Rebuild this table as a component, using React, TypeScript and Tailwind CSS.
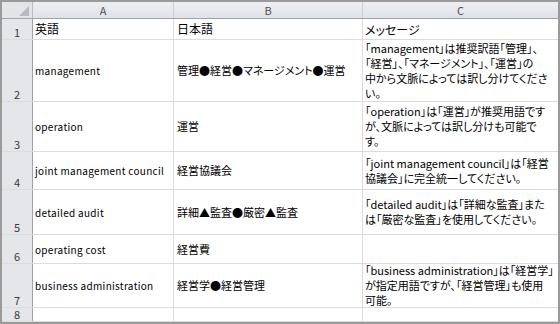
const font = { fontFamily: '"Noto Sans CJK JP", "Noto Sans", sans-serif' };

type Row = {
  n: number;
  h: string;
  a: string;
  b: string;
  c: string[];
};

const rows: Row[] = [
  { n: 1, h: "h-[21px]", a: "英語", b: "日本語", c: ["メッセージ"] },
  {
    n: 2,
    h: "h-[62px]",
    a: "management",
    b: "管理●経営●マネージメント●運営",
    c: [
      "「management」は推奨訳語「管理」、",
      "「経営」、「マネージメント」、「運営」の",
      "中から文脈によっては訳し分けてくださ",
      "い。",
    ],
  },
  {
    n: 3,
    h: "h-[50px]",
    a: "operation",
    b: "運営",
    c: ["「operation」は「運営」が推奨用語です", "が、文脈によっては訳し分けも可能で", "す。"],
  },
  {
    n: 4,
    h: "h-[38px]",
    a: "joint management council",
    b: "経営協議会",
    c: ["「joint management council」は「経営", "協議会」に完全統一してください。"],
  },
  {
    n: 5,
    h: "h-[45px]",
    a: "detailed audit",
    b: "詳細▲監査●厳密▲監査",
    c: ["「detailed audit」は「詳細な監査」また", "は「厳密な監査」を使用してください。"],
  },
  { n: 6, h: "h-[29px]", a: "operating cost", b: "経営費", c: [] },
  {
    n: 7,
    h: "h-[44px]",
    a: "business administration",
    b: "経営学●経営管理",
    c: ["「business administration」は「経営学」", "が指定用語ですが、「経営管理」も使用", "可能。"],
  },
  { n: 8, h: "h-[14px]", a: "", b: "", c: [] },
];

export default function App() {
  return (
    <div
      className="w-[560px] h-[324px] bg-[#9a9a9a] p-[2px] overflow-hidden [font-feature-settings:'palt']"
      style={font}
    >
      <div className="bg-white h-full w-[556px] flex flex-col">
        {/* column headers */}
        <div className="flex h-[17px] border-b border-[#9ea3aa] bg-gradient-to-b from-[#eef0f3] to-[#dfe2e7] text-[11px] leading-[16px] text-[#4f4f4f]">
          <div className="w-[31px] border-r border-[#b9bdc3] relative bg-[#e2e4e8]">
            <svg className="absolute right-[3px] bottom-[2px]" width="10" height="10" viewBox="0 0 10 10">
              <polygon points="10,0 10,10 0,10" fill="#b7bbc1" />
            </svg>
          </div>
          <div className="w-[141px] border-r border-[#c9ccd1] text-center">A</div>
          <div className="w-[189px] border-r border-[#c9ccd1] text-center">B</div>
          <div className="w-[195px] text-center">C</div>
        </div>

        {rows.map((r) => (
          <div key={r.n} className={`flex ${r.h} border-b border-[#dadcdd] text-[11px] text-black`}>
            <div className="w-[31px] shrink-0 bg-[#e4e6ea] border-r border-[#9ea3aa] flex items-end justify-center text-[11px] leading-[11px] pb-px text-[#3a3a3a]">
              {r.n}
            </div>
            <div
              className={`w-[141px] shrink-0 border-r border-[#dadcdd] flex items-center pl-[2px] whitespace-nowrap ${
                r.n === 1 ? "text-[12px]" : "text-[10px] tracking-[0.3px]"
              }`}
            >
              {r.a}
            </div>
            <div
              className={`w-[189px] shrink-0 border-r border-[#dadcdd] flex items-center pl-[3px] whitespace-nowrap ${
                r.n === 1 ? "text-[12px]" : "text-[11px]"
              }`}
            >
              {r.b}
            </div>
            <div
              className={`w-[195px] shrink-0 flex flex-col justify-center pl-[2px] whitespace-nowrap leading-[15px] ${
                r.n === 1 ? "text-[12px]" : "text-[11px]"
              }`}
            >
              {r.c.map((l, i) => (
                <div key={i}>{l}</div>
              ))}
            </div>
          </div>
        ))}
      </div>
    </div>
  );
}
